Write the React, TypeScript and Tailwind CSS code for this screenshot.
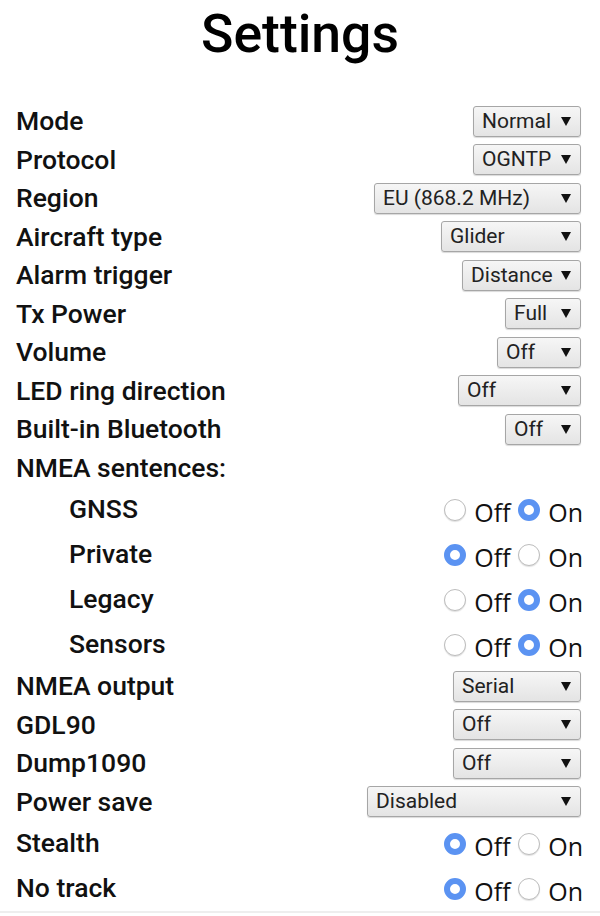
import React from 'react';

type Row =
  | { kind: 'select'; label: string; value: string; width: string }
  | { kind: 'radio'; label: string; on: boolean; sub?: boolean }
  | { kind: 'heading'; label: string };

const rows: Row[] = [
  { kind: 'select', label: 'Mode', value: 'Normal', width: 'w-[108px]' },
  { kind: 'select', label: 'Protocol', value: 'OGNTP', width: 'w-[108px]' },
  { kind: 'select', label: 'Region', value: 'EU (868.2 MHz)', width: 'w-[207px]' },
  { kind: 'select', label: 'Aircraft type', value: 'Glider', width: 'w-[140px]' },
  { kind: 'select', label: 'Alarm trigger', value: 'Distance', width: 'w-[119px]' },
  { kind: 'select', label: 'Tx Power', value: 'Full', width: 'w-[76px]' },
  { kind: 'select', label: 'Volume', value: 'Off', width: 'w-[84px]' },
  { kind: 'select', label: 'LED ring direction', value: 'Off', width: 'w-[123px]' },
  { kind: 'select', label: 'Built-in Bluetooth', value: 'Off', width: 'w-[76px]' },
  { kind: 'heading', label: 'NMEA sentences:' },
  { kind: 'radio', label: 'GNSS', on: true, sub: true },
  { kind: 'radio', label: 'Private', on: false, sub: true },
  { kind: 'radio', label: 'Legacy', on: true, sub: true },
  { kind: 'radio', label: 'Sensors', on: true, sub: true },
  { kind: 'select', label: 'NMEA output', value: 'Serial', width: 'w-[128px]' },
  { kind: 'select', label: 'GDL90', value: 'Off', width: 'w-[128px]' },
  { kind: 'select', label: 'Dump1090', value: 'Off', width: 'w-[128px]' },
  { kind: 'select', label: 'Power save', value: 'Disabled', width: 'w-[214px]' },
  { kind: 'radio', label: 'Stealth', on: false },
  { kind: 'radio', label: 'No track', on: false },
];

function Select({ value, width }: { value: string; width: string }) {
  return (
    <div
      className={`${width} h-[31px] flex items-center justify-between pl-[8px] pr-[9px] rounded-[3px] border border-[#a6a6a6] bg-gradient-to-b from-[#f6f6f6] to-[#e4e4e4] shadow-[0_1px_1px_rgba(0,0,0,0.15)] text-[21px] text-[#222] font-['Roboto',sans-serif]`}
    >
      <span className="leading-none">{value}</span>
      <svg width="10" height="9" viewBox="0 0 10 9" className="shrink-0">
        <polygon points="0,0 10,0 5,9" fill="#111" />
      </svg>
    </div>
  );
}

function Radio({ checked }: { checked: boolean }) {
  return checked ? (
    <span className="block w-[22px] h-[22px] rounded-full border-[6.5px] border-[#5b93f2] bg-white shrink-0" />
  ) : (
    <span className="block w-[22px] h-[22px] rounded-full border border-[#bdbdbd] bg-white shadow-[0_1px_1px_rgba(0,0,0,0.12)] shrink-0" />
  );
}

function OnOff({ on }: { on: boolean }) {
  return (
    <div className="flex items-center gap-[8px] font-['Open_Sans',sans-serif] text-[25px] text-[#111] leading-none">
      <Radio checked={!on} />
      <span className="mt-[5px] w-[36px]">Off</span>
      <Radio checked={on} />
      <span className="mt-[5px] -mr-[2px]">On</span>
    </div>
  );
}

export default function App() {
  return (
    <div className="w-[600px] h-[916px] bg-white overflow-hidden">
      <div className="h-[102px] pt-[3px] text-center font-['Roboto',sans-serif] font-medium text-[53.5px] leading-[62px] text-black">
        Settings
      </div>
      <div className="border-b-2 border-[#eeeeee]">
        {rows.map((row) => (
          <div
            key={row.label}
            className={`flex items-center justify-between pl-[16px] pr-[19px] ${
              row.kind === 'radio' ? 'h-[45px]' : 'h-[38.5px]'
            }`}
          >
            <span
              className={`font-['Roboto',sans-serif] font-medium text-[26.5px] text-[#111] leading-none ${
                row.kind === 'radio' && row.sub ? 'pl-[53px]' : ''
              }`}
            >
              {row.label}
            </span>
            {row.kind === 'select' && <Select value={row.value} width={row.width} />}
            {row.kind === 'radio' && <OnOff on={row.on} />}
          </div>
        ))}
      </div>
    </div>
  );
}
